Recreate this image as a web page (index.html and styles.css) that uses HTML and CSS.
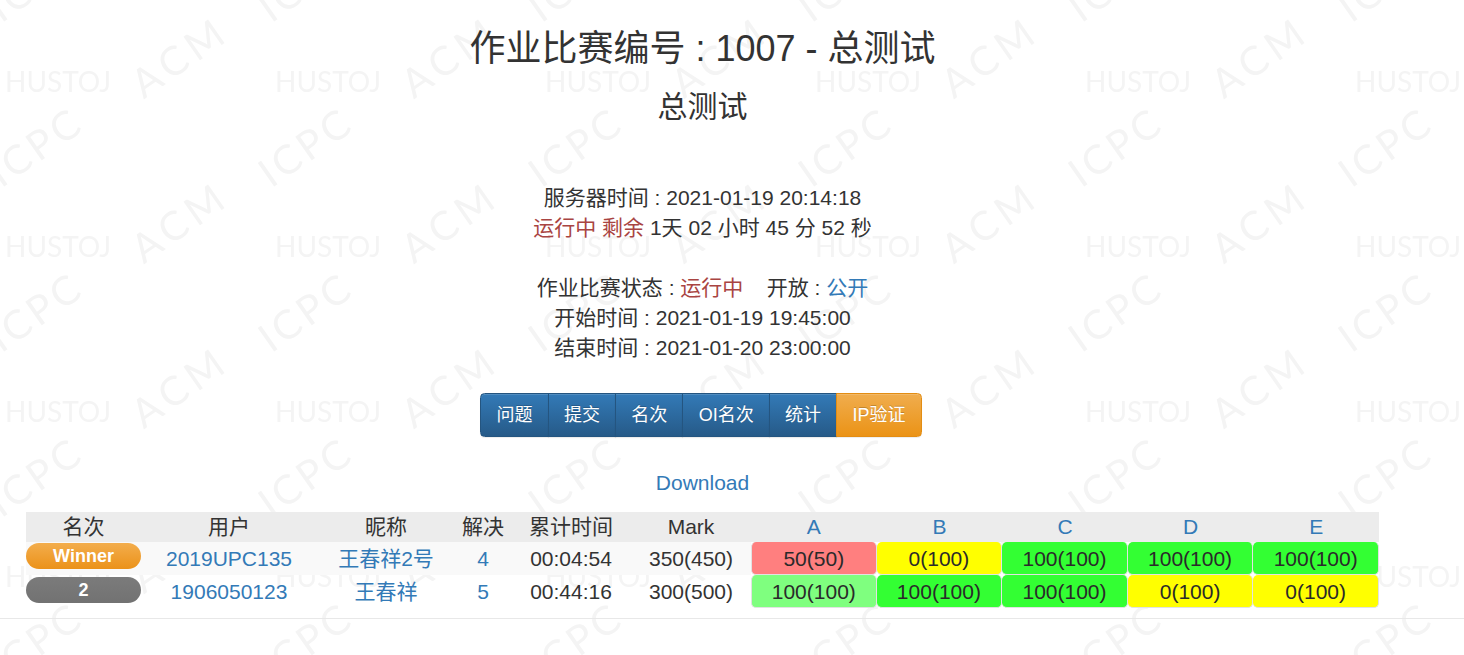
FILE: index.html
```html
<!DOCTYPE html>
<html lang="zh-CN">
<head>
<meta charset="utf-8">
<title>作业比赛编号 : 1007 - 总测试</title>
<link rel="stylesheet" href="styles.css">
</head>
<body>
<svg class="watermark" width="1464" height="655" aria-hidden="true">
  <defs>
    <pattern id="wm" patternUnits="userSpaceOnUse" x="0" y="0" width="270" height="165">
      <g class="wm-text">
        <text x="5" y="92" font-size="28">HUSTOJ</text>
        <text transform="translate(180 57) rotate(-35)" x="0" y="14" text-anchor="middle" font-size="40" letter-spacing="6">ACM</text>
        <text transform="translate(306 147) rotate(-35)" x="0" y="14" text-anchor="middle" font-size="40" letter-spacing="4">ICPC</text>
        <text transform="translate(36 147) rotate(-35)" x="0" y="14" text-anchor="middle" font-size="40" letter-spacing="4">ICPC</text>
        <text transform="translate(306 -18) rotate(-35)" x="0" y="14" text-anchor="middle" font-size="40" letter-spacing="4">ICPC</text>
        <text transform="translate(36 -18) rotate(-35)" x="0" y="14" text-anchor="middle" font-size="40" letter-spacing="4">ICPC</text>
      </g>
    </pattern>
  </defs>
  <rect width="1464" height="655" fill="url(#wm)"/>
</svg>

<div class="page">
  <div class="wrap">
    <h1 class="title">作业比赛编号 : 1007 - 总测试</h1>
    <h2 class="subtitle">总测试</h2>

    <div class="info">
      <div>服务器时间 : 2021-01-19 20:14:18</div>
      <div><span class="danger">运行中 剩余</span> 1天 02 小时 45 分 52 秒</div>
      <div class="blank"></div>
      <div>作业比赛状态 : <span class="danger">运行中</span>&nbsp;&nbsp;&nbsp;&nbsp;开放 : <a class="link" href="#">公开</a></div>
      <div>开始时间 : 2021-01-19 19:45:00</div>
      <div>结束时间 : 2021-01-20 23:00:00</div>
    </div>

    <div class="btn-group">
      <a class="btn btn-primary" href="#">问题</a>
      <a class="btn btn-primary" href="#">提交</a>
      <a class="btn btn-primary" href="#">名次</a>
      <a class="btn btn-primary" href="#">OI名次</a>
      <a class="btn btn-primary" href="#">统计</a>
      <a class="btn btn-warning" href="#">IP验证</a>
    </div>

    <div class="download"><a class="link" href="#">Download</a></div>

    <table class="rank">
      <colgroup>
        <col class="c-rank">
        <col class="c-user">
        <col class="c-nick">
        <col class="c-solved">
        <col class="c-time">
        <col class="c-mark">
        <col class="c-prob">
        <col class="c-prob">
        <col class="c-prob">
        <col class="c-prob">
        <col class="c-prob">
      </colgroup>
      <thead>
        <tr>
          <th>名次</th>
          <th>用户</th>
          <th>昵称</th>
          <th>解决</th>
          <th>累计时间</th>
          <th>Mark</th>
          <th><a class="link" href="#">A</a></th>
          <th><a class="link" href="#">B</a></th>
          <th><a class="link" href="#">C</a></th>
          <th><a class="link" href="#">D</a></th>
          <th><a class="link" href="#">E</a></th>
        </tr>
      </thead>
      <tbody>
        <tr class="odd">
          <td class="rank-cell"><span class="badge badge-winner">Winner</span></td>
          <td><a class="link" href="#">2019UPC135</a></td>
          <td><a class="link" href="#">王春祥2号</a></td>
          <td><a class="link" href="#">4</a></td>
          <td>00:04:54</td>
          <td>350(450)</td>
          <td class="prob first red">50(50)</td>
          <td class="prob yellow">0(100)</td>
          <td class="prob green">100(100)</td>
          <td class="prob green">100(100)</td>
          <td class="prob green">100(100)</td>
        </tr>
        <tr class="even">
          <td class="rank-cell"><span class="badge badge-default">2</span></td>
          <td><a class="link" href="#">1906050123</a></td>
          <td><a class="link" href="#">王春祥</a></td>
          <td><a class="link" href="#">5</a></td>
          <td>00:44:16</td>
          <td>300(500)</td>
          <td class="prob first lightgreen">100(100)</td>
          <td class="prob green">100(100)</td>
          <td class="prob green">100(100)</td>
          <td class="prob yellow">0(100)</td>
          <td class="prob yellow">0(100)</td>
        </tr>
      </tbody>
    </table>
  </div>
  <div class="footer-line"></div>
</div>
</body>
</html>
```

FILE: styles.css
```css
html {
  background: #ffffff;
}

body {
  margin: 0;
  font-family: "Liberation Sans", "Noto Sans CJK SC", sans-serif;
  font-size: 21px;
  line-height: 30px;
  color: #333333;
  position: relative;
  min-height: 655px;
  overflow: hidden;
}

.watermark {
  position: absolute;
  top: 0;
  left: 0;
  z-index: 0;
  pointer-events: none;
}

.wm-text {
  fill: #f4f4f4;
  font-family: Lato, "DejaVu Sans", sans-serif;
}

.page {
  position: relative;
  z-index: 1;
}

.wrap {
  margin-left: 26px;
  width: 1353px;
  text-align: center;
}

.title {
  margin: 29px 0 0;
  font-size: 36px;
  line-height: 40px;
  font-weight: 400;
  color: #333333;
}

.subtitle {
  margin: 21px 0 0;
  font-size: 30px;
  line-height: 34px;
  font-weight: 400;
  color: #333333;
}

.info {
  margin-top: 59px;
}

.blank {
  height: 30px;
}

.danger {
  color: #a94442;
}

.link {
  color: #337ab7;
  text-decoration: none;
}

.btn-group {
  margin-top: 30px;
  margin-left: -3px;
  display: inline-flex;
  vertical-align: top;
}

.btn {
  display: block;
  font-size: 18px;
  line-height: 27px;
  padding: 7.5px 15.2px;
  border: 1px solid #245580;
  color: #ffffff;
  text-decoration: none;
  text-shadow: 0 -1px 0 rgba(0, 0, 0, 0.2);
  box-shadow: inset 0 1px 0 rgba(255, 255, 255, 0.15), 0 1px 1px rgba(0, 0, 0, 0.075);
}

.btn + .btn {
  margin-left: -1px;
}

.btn:first-child {
  border-radius: 4.5px 0 0 4.5px;
}

.btn:last-child {
  border-radius: 0 4.5px 4.5px 0;
}

.btn-primary {
  background: linear-gradient(to bottom, #337ab7 0%, #265a88 100%);
}

.btn-warning {
  background: linear-gradient(to bottom, #f0ad4e 0%, #eb9316 100%);
  border-color: #e38d13;
}

.download {
  margin-top: 31px;
}

.rank {
  margin-top: 14px;
  width: 1353px;
  table-layout: fixed;
  border-collapse: separate;
  border-spacing: 0;
}

.c-rank { width: 115px; }
.c-user { width: 176px; }
.c-nick { width: 138px; }
.c-solved { width: 56px; }
.c-time { width: 120px; }
.c-mark { width: 120px; }
.c-prob { width: 125.6px; }

.rank th {
  height: 30px;
  padding: 0;
  font-weight: 400;
  background: #ececec;
  text-align: center;
  vertical-align: middle;
}

.rank td {
  height: 33px;
  padding: 1px 0 0;
  text-align: center;
  vertical-align: middle;
  box-sizing: border-box;
}

.rank tr.odd td {
  background-color: #f9f9f9;
}

.rank td.rank-cell {
  vertical-align: top;
  padding-top: 1px;
}

.rank tr.even td.rank-cell {
  padding-top: 2px;
}

.badge {
  display: block;
  height: 26px;
  line-height: 26px;
  border-radius: 13px;
  color: #ffffff;
  font-weight: 700;
  font-size: 18px;
}

.badge-winner {
  background: linear-gradient(to bottom, #f3ad4c 0%, #eb921a 100%);
}

.badge-default {
  background: linear-gradient(to bottom, #7b7b7b 0%, #727272 100%);
}

.rank td.prob {
  color: #2a2a2a;
  border-right: 1px solid #e2e2e2;
  border-bottom: 1px solid #e2e2e2;
  border-radius: 5px;
}

.rank td.prob.first {
  border-left: 1px solid #e2e2e2;
}

.rank tr td.red { background-color: #ff7f7f; }
.rank tr td.yellow { background-color: #ffff00; }
.rank tr td.green { background-color: #33ff33; }
.rank tr td.lightgreen { background-color: #7fff7f; }

.footer-line {
  margin-top: 10px;
  border-top: 1px solid #e8e8e8;
}
```
